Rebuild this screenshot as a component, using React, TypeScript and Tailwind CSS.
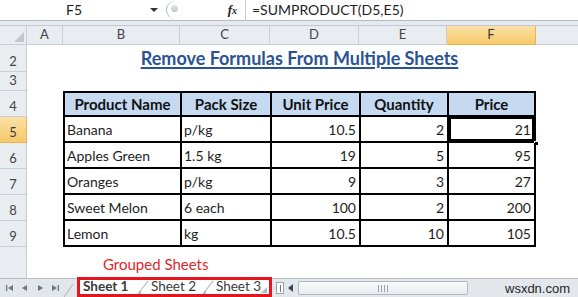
import React from 'react';

const cols = [
  { key: 'A', w: 'w-[36px]' },
  { key: 'B', w: 'w-[117px]' },
  { key: 'C', w: 'w-[90px]' },
  { key: 'D', w: 'w-[89px]' },
  { key: 'E', w: 'w-[88px]' },
  { key: 'F', w: 'w-[89px]' },
];

const rows = [
  { n: 5, name: 'Banana', pack: 'p/kg', unit: '10.5', qty: '2', price: '21' },
  { n: 6, name: 'Apples Green', pack: '1.5 kg', unit: '19', qty: '5', price: '95' },
  { n: 7, name: 'Oranges', pack: 'p/kg', unit: '9', qty: '3', price: '27' },
  { n: 8, name: 'Sweet Melon', pack: '6 each', unit: '100', qty: '2', price: '200' },
  { n: 9, name: 'Lemon', pack: 'kg', unit: '10.5', qty: '10', price: '105' },
];

const RowHead = ({ n, active }: { n?: number; active?: boolean }) => (
  <div
    className={`w-[27px] shrink-0 flex items-end justify-center pb-[2px] border-r border-b text-[13px] leading-[16px] ${
      active
        ? 'bg-gradient-to-b from-[#fbe0a4] to-[#f6c96a] border-[#efb34a] text-[#3b3b3b]'
        : 'bg-[#e9ecf0] border-[#c8ced6] text-[#444]'
    }`}
  >
    {n}
  </div>
);

const Slant = () => (
  <svg width="12" height="14" viewBox="0 0 12 14" className="shrink-0 self-end">
    <line x1="1" y1="14" x2="11" y2="1" stroke="#9aa3ae" strokeWidth="1" />
    <path d="M4 14 L1 14 L4 10 Z" fill="#b5bcc5" />
  </svg>
);

export default function App() {
  return (
    <div className="w-[578px] h-[297px] overflow-hidden bg-white flex flex-col font-['Lato',sans-serif] text-[#1e1e1e]">
      {/* formula bar */}
      <div className="h-[21px] shrink-0 flex items-center bg-white border-b border-[#b3bac4]">
        <div className="w-[148px] text-center text-[14px] leading-none">F5</div>
        <svg width="10" height="6" viewBox="0 0 10 6" className="ml-[1px]">
          <path d="M1 1 L9 1 L5 5 Z" fill="#333" />
        </svg>
        <div className="ml-[4px] h-[18px] w-[82px] relative flex items-center">
          <div className="absolute left-[3px] top-0 h-[18px] w-[14px] rounded-l-full border-l border-[#a9b0b9]" />
          <div className="absolute left-[8px] top-[4px] w-[7px] h-[7px] rounded-full bg-gradient-to-b from-[#e6e6e6] to-[#bfc3c8]" />
          <span className="ml-auto mr-[8px] text-[13px] italic font-bold font-['Liberation_Serif',serif] text-[#222]">
            f<span className="text-[10px]">x</span>
          </span>
        </div>
        <div className="h-[21px] border-l border-[#c6ccd4]" />
        <div className="pl-[6px] text-[14px] leading-none">=SUMPRODUCT(D5,E5)</div>
      </div>
      <div className="h-[5px] shrink-0 bg-[#e6e9ed] border-b border-[#c2c8d0]" />

      {/* column headers */}
      <div className="h-[19px] shrink-0 flex text-[13px] text-[#444]">
        <div className="w-[27px] shrink-0 bg-[#e9ecf0] border-r border-b border-[#c8ced6] relative">
          <svg width="10" height="10" viewBox="0 0 10 10" className="absolute right-[2px] bottom-[2px]">
            <path d="M10 0 L10 10 L0 10 Z" fill="#c1c7cf" />
          </svg>
        </div>
        {cols.map((c) => (
          <div
            key={c.key}
            className={`${c.w} shrink-0 flex items-center justify-center border-r border-b ${
              c.key === 'F'
                ? 'bg-gradient-to-b from-[#fbe0a4] to-[#f6c96a] border-[#efb34a] text-[#3b3b3b]'
                : 'bg-[#e9ecf0] border-[#c8ced6]'
            }`}
          >
            {c.key}
          </div>
        ))}
        <div className="flex-1 bg-[#e9ecf0] border-b border-[#c8ced6]" />
      </div>

      {/* row 2: title */}
      <div className="h-[27px] shrink-0 flex">
        <RowHead n={2} />
        <div className="w-[36px] shrink-0" />
        <div className="w-[473px] shrink-0 flex items-end justify-center pb-[4px]">
          <span className="text-[18px] font-bold text-[#2b5393] underline decoration-[1.5px] underline-offset-[2px] leading-[20px] whitespace-nowrap">
            Remove Formulas From Multiple Sheets
          </span>
        </div>
      </div>

      {/* row 3 */}
      <div className="h-[19px] shrink-0 flex">
        <RowHead n={3} />
      </div>

      {/* row 4: table header */}
      <div className="h-[26px] shrink-0 flex">
        <RowHead n={4} />
        <div className="w-[36px] shrink-0" />
        {['Product Name', 'Pack Size', 'Unit Price', 'Quantity', 'Price'].map((h, i) => (
          <div
            key={h}
            className={`${cols[i + 1].w} shrink-0 flex items-center justify-center bg-[#c5d9f1] border-t-2 border-l-2 border-b-2 border-black text-[15px] font-bold text-[#111] whitespace-nowrap ${
              i === 4 ? 'border-r-2' : ''
            }`}
          >
            {h}
          </div>
        ))}
      </div>

      {/* data rows */}
      {rows.map((r) => (
        <div key={r.n} className="h-[26px] shrink-0 flex text-[14px]">
          <RowHead n={r.n} active={r.n === 5} />
          <div className="w-[36px] shrink-0" />
          <div className="w-[117px] shrink-0 flex items-center pl-[2px] border-l-2 border-b-2 border-black">{r.name}</div>
          <div className="w-[90px] shrink-0 flex items-center pl-[2px] border-l-2 border-b-2 border-black">{r.pack}</div>
          <div className="w-[89px] shrink-0 flex items-center justify-end pr-[3px] border-l-2 border-b-2 border-black">{r.unit}</div>
          <div className="w-[88px] shrink-0 flex items-center justify-end pr-[3px] border-l-2 border-b-2 border-black">{r.qty}</div>
          <div className="w-[89px] shrink-0 relative flex items-center justify-end pr-[3px] border-l-2 border-r-2 border-b-2 border-black">
            {r.price}
            {r.n === 5 && (
              <>
                <div className="absolute left-0 right-0 top-0 bottom-0 border-2 border-black" />
                <div className="absolute right-[-5px] bottom-[-5px] w-[5px] h-[5px] bg-black border border-white" />
              </>
            )}
          </div>
        </div>
      ))}

      {/* row 10 area with label */}
      <div className="h-[31px] shrink-0 flex">
        <div className="w-[27px] shrink-0 bg-[#e9ecf0] border-r border-[#c8ced6]" />
        <div className="pl-[76px] pt-[8px] text-[15px] leading-[18px] text-[#e3262c] whitespace-nowrap">Grouped Sheets</div>
      </div>

      {/* sheet tab bar */}
      <div className="h-[19px] shrink-0 flex items-stretch bg-[#e3e7ec] border-t border-[#b5bdc8]">
        <div className="w-[64px] shrink-0 flex items-center justify-around px-[2px]">
          <svg width="8" height="8" viewBox="0 0 8 8">
            <rect x="0" y="1" width="1.3" height="6" fill="#6a7685" />
            <path d="M7 1 L7 7 L2 4 Z" fill="#6a7685" />
          </svg>
          <svg width="8" height="8" viewBox="0 0 8 8">
            <path d="M6 1 L6 7 L1 4 Z" fill="#6a7685" />
          </svg>
          <svg width="8" height="8" viewBox="0 0 8 8">
            <path d="M2 1 L2 7 L7 4 Z" fill="#6a7685" />
          </svg>
          <svg width="8" height="8" viewBox="0 0 8 8">
            <path d="M1 1 L1 7 L6 4 Z" fill="#6a7685" />
            <rect x="6.7" y="1" width="1.3" height="6" fill="#6a7685" />
          </svg>
        </div>
        <div className="w-[13px] shrink-0 flex items-end">
          <svg width="10" height="16" viewBox="0 0 10 16">
            <line x1="0" y1="16" x2="9" y2="3" stroke="#aab2bc" />
          </svg>
        </div>
        <div className="w-[195px] shrink-0 -mt-[2px] border-[3px] border-[#e4151c] bg-white flex items-center pl-[3px] text-[13.5px] leading-none text-[#3a3a3a] whitespace-nowrap">
          <span className="font-bold w-[54px]">Sheet 1</span>
          <Slant />
          <span className="w-[53px] pl-[2px]">Sheet 2</span>
          <Slant />
          <span className="pl-[2px]">Sheet 3</span>
          <svg width="6" height="6" viewBox="0 0 6 6" className="ml-auto mr-[2px] self-end mb-[1px]">
            <path d="M6 0 L6 6 L0 6 Z" fill="#b5bcc5" />
          </svg>
        </div>
        <div className="ml-[4px] my-[3px] w-[8px] shrink-0 bg-white border border-[#9aa3ae] flex items-center justify-center">
          <div className="w-[1px] h-[7px] bg-[#6a7685]" />
        </div>
        <div className="w-[14px] shrink-0 flex items-center justify-center">
          <svg width="6" height="8" viewBox="0 0 6 8">
            <path d="M5 0 L5 8 L0 4 Z" fill="#3e4854" />
          </svg>
        </div>
        <div className="w-[170px] shrink-0 my-[2px] rounded-[2px] border border-[#aeb6c0] bg-gradient-to-b from-[#fbfbfc] to-[#e8ebef] flex items-center justify-center gap-[2px]">
          <div className="w-[1px] h-[7px] bg-[#9aa3ae]" />
          <div className="w-[1px] h-[7px] bg-[#9aa3ae]" />
          <div className="w-[1px] h-[7px] bg-[#9aa3ae]" />
          <div className="w-[1px] h-[7px] bg-[#9aa3ae]" />
        </div>
        <div className="flex-1 flex items-center pl-[37px] text-[13px] leading-none font-['Liberation_Sans',sans-serif] text-[#1f1f1f] whitespace-nowrap">
          wsxdn.com
        </div>
      </div>
    </div>
  );
}
